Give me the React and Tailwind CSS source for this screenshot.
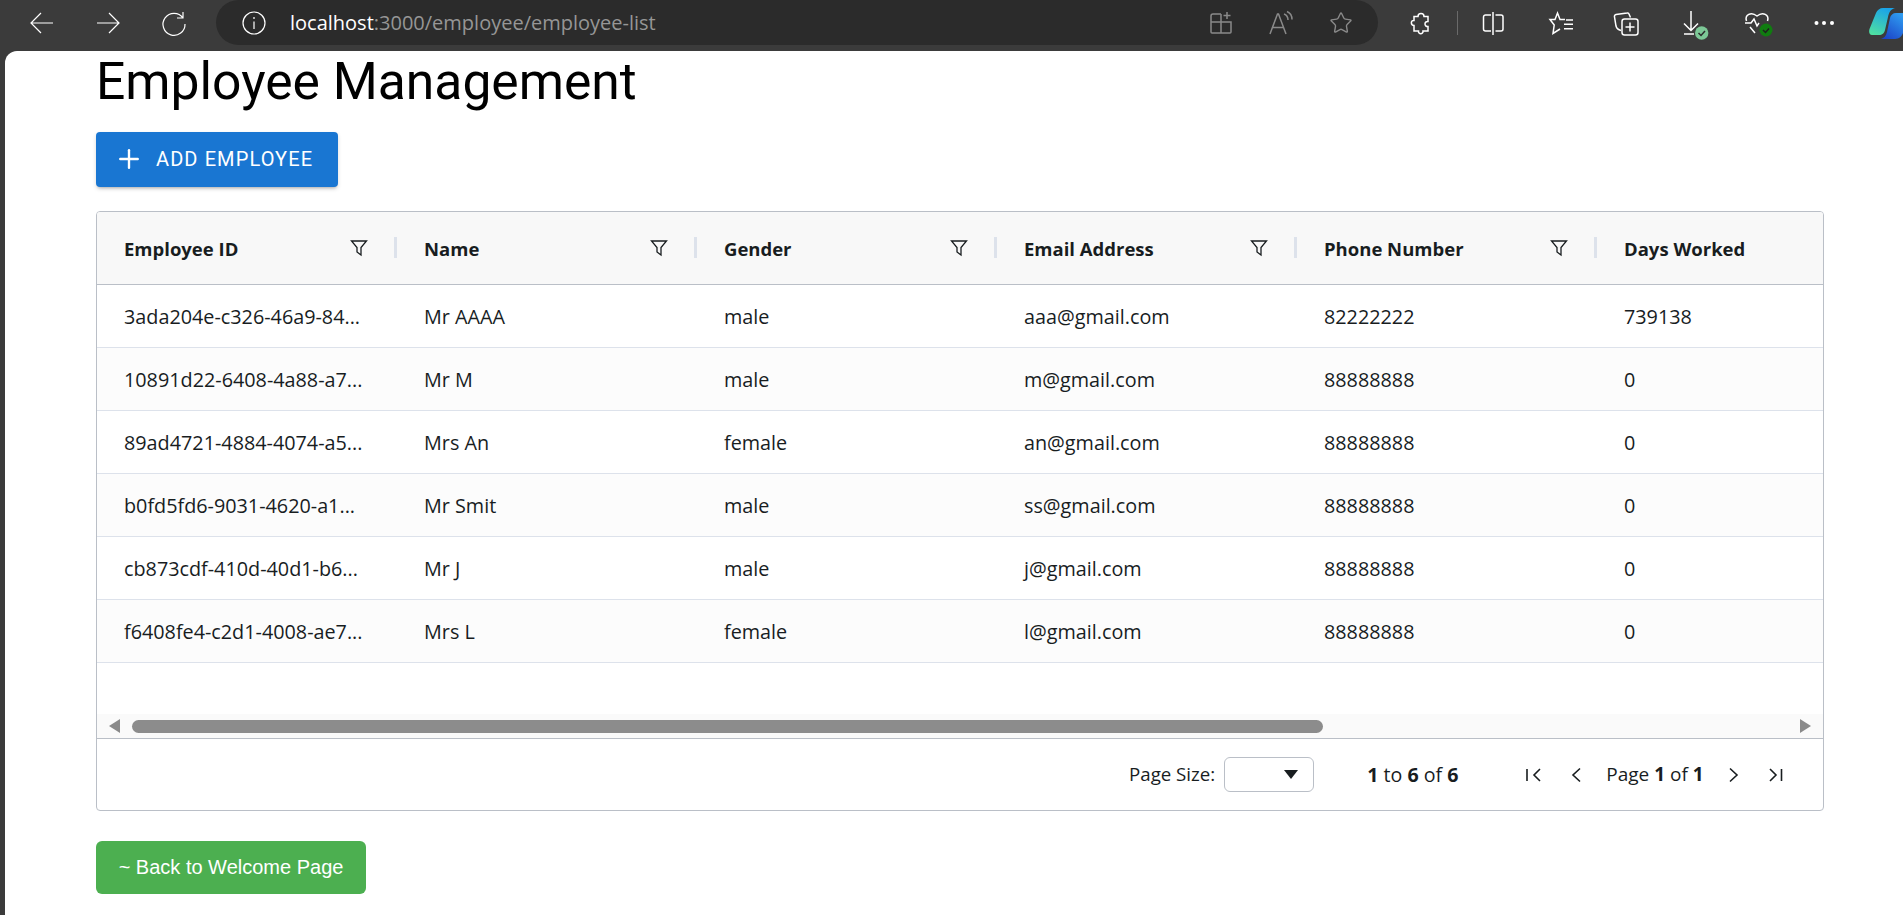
import { Star, Plus } from "lucide-react";

const columns = [
  { title: "Employee ID", filter: true },
  { title: "Name", filter: true },
  { title: "Gender", filter: true },
  { title: "Email Address", filter: true },
  { title: "Phone Number", filter: true },
  { title: "Days Worked", filter: false },
];

const rows = [
  ["3ada204e-c326-46a9-84...", "Mr AAAA", "male", "aaa@gmail.com", "82222222", "739138"],
  ["10891d22-6408-4a88-a7...", "Mr M", "male", "m@gmail.com", "88888888", "0"],
  ["89ad4721-4884-4074-a5...", "Mrs An", "female", "an@gmail.com", "88888888", "0"],
  ["b0fd5fd6-9031-4620-a1...", "Mr Smit", "male", "ss@gmail.com", "88888888", "0"],
  ["cb873cdf-410d-40d1-b6...", "Mr J", "male", "j@gmail.com", "88888888", "0"],
  ["f6408fe4-c2d1-4008-ae7...", "Mrs L", "female", "l@gmail.com", "88888888", "0"],
];

const FilterIcon = () => (
  <svg width="18" height="18" viewBox="0 0 18 18" fill="none" stroke="#181d1f" strokeWidth="1.3">
    <path d="M1.5 2h15l-5.5 6.5V16l-4-3V8.5z" />
  </svg>
);

const Chevron = ({ d }) => (
  <svg width="18" height="18" viewBox="0 0 18 18" fill="none" stroke="#181d1f" strokeWidth="1.6">
    <path d={d} />
  </svg>
);

// toolbar icon, 24 box, thin white stroke
const Tool = ({ children, className = "", size = 24, width = 1.5 }) => (
  <svg width={size} height={size} viewBox="0 0 24 24" fill="none" stroke="currentColor" strokeWidth={width} className={`shrink-0 overflow-visible ${className}`}>
    {children}
  </svg>
);

const BrowserBar = () => (
  <div className="h-[51px] flex items-start text-white">
    <div className="flex items-center h-[45px] pl-[30px] shrink-0">
      <Tool width={1.2}><path d="M23 12H1M11 2 1 12l10 10" /></Tool>
      <Tool width={1.2} className="ml-[42px]"><path d="M1 12h22M13 2l10 10-10 10" /></Tool>
      <Tool width={1.2} className="ml-[42px]"><path d="M21 1v6h-6M21 7A11 11 0 1 0 23 13" /></Tool>
    </div>
    <div className="ml-[30px] w-[1162px] h-[45px] rounded-[24px] bg-[#2b2b2b] flex items-center pl-[26px]">
      <Tool width={1.2}><circle cx="12" cy="12" r="11" /><path d="M12 10.5V18M12 6v2" /></Tool>
      <div className="ml-[24px] text-[20px] font-['Open_Sans',sans-serif]">
        localhost<span className="text-[#969696]">:3000/employee/employee-list</span>
      </div>
      <div className="ml-auto flex items-center gap-[36px] pr-[25px] text-[#8a8a8a]">
        <Tool><path d="M12 3H4a2 2 0 0 0-2 2v16a1 1 0 0 0 1 1h18a1 1 0 0 0 1-1V11H2M12 3v19M18 1v7M14.5 4.500h7" /></Tool>
        <Tool><path d="M1 23 8.500 3h1L17 23M3.500 16.500h11M15 3c2.500 1 4 3 4 6M18 .5c3.500 1.500 5 4.500 5 8" /></Tool>
        <Star size={24} strokeWidth={1.4} />
      </div>
    </div>
    <div className="flex items-center h-[45px] ml-[31px]">
      <Tool><path d="M9 5.500c0-4 6-4 6 0h4v5c-4-.5-4 5.500 0 5v4.500h-5c.5 3.500-5 3.500-4.500 0H5v-5.500C1.500 14.500 1.500 9 5 9.500v-4z" /></Tool>
      <div className="ml-[24px] w-px h-[24px] bg-[#6a6a6a]"></div>
      <Tool className="ml-[23px]"><path d="M10 4H4.500a2 2 0 0 0-2 2v12a2 2 0 0 0 2 2H10M14.500 4H20a2 2 0 0 1 2 2v12a2 2 0 0 1-2 2h-5.500M12 1v23" /></Tool>
      <Tool className="ml-[44px]"><path d="M16 8.500h-5L8.500 2 6 8.500H1l4.200 5.500L4 22.500l7-4.500M17 9h7M15 13.300h9M15 17.700h9" /></Tool>
      <Tool className="ml-[41px]"><path d="M16.500 6.500 15 3a1.500 1.500 0 0 0-2-1L2 3.500A2 2 0 0 0 .5 6L2 15c.5 2 3 4 5 4.500" /><rect x="8" y="8" width="16" height="16" rx="2.500" /><path d="M16 11.500v9M11.500 16h9" /></Tool>
      <Tool className="ml-[43px]"><path d="M10 0v19M3 12.500l7 7 7-7M3 23h10" /><circle cx="20.700" cy="22" r="6.700" fill="#7cc796" stroke="none" /><path d="m17.500 22 2.500 2.500 4-4.500" stroke="#2b2b2b" /></Tool>
      <Tool className="ml-[40px]"><path d="M1.500 10C-.5 4 6 0 12 5c6-5 12.500-1 10.500 5M0 12h6l3-4 3 7 2-3M5 16l5 6" /><circle cx="21" cy="19" r="6.500" fill="#107c10" stroke="none" /><path d="m18 19 2.500 2.500 3.500-4" stroke="#1f1f1f" /></Tool>
      <Tool className="ml-[43px]"><circle cx="4.500" cy="12" r="2" fill="currentColor" stroke="none" /><circle cx="12" cy="12" r="2" fill="currentColor" stroke="none" /><circle cx="20" cy="12" r="2" fill="currentColor" stroke="none" /></Tool>
      <svg width="34" height="32" viewBox="0 0 34 32" className="ml-[33px] shrink-0">
        <defs>
          <linearGradient id="copilotLeft" x1="0.6" y1="0" x2="0.2" y2="1">
            <stop offset="0" stopColor="#1aa3e8" />
            <stop offset="1" stopColor="#4fe0a0" />
          </linearGradient>
          <linearGradient id="copilotRight" x1="0.8" y1="0" x2="0.2" y2="1">
            <stop offset="0" stopColor="#2e9bf0" />
            <stop offset="1" stopColor="#1c44c8" />
          </linearGradient>
        </defs>
        <path d="M20 32h-8c3-1 5-3 6-7l3-14c.5-3 3-5 6-5h7v20c-1 3-4 6-8 6z" fill="url(#copilotRight)" />
        <path d="M14 1h12c-4 1-6 4-7 9l-3 13c-.5 3-3 5-6 5H3C.5 28-.5 25 .5 22L7 6c1-3 4-5 7-5z" fill="url(#copilotLeft)" />
      </svg>
    </div>
  </div>
);

export default function App() {
  return (
    <div className="h-[915px] w-full bg-[#3b3b3b] overflow-hidden font-['Open_Sans',sans-serif]">
      <BrowserBar />
      <div className="ml-[5px] h-[864px] bg-white rounded-tl-[12px] pl-[91px] pr-[79px]">
        <h1 className="text-[51.6px] leading-[61px] font-['Roboto',sans-serif] text-black m-0">Employee Management</h1>
        <button className="mt-[20px] h-[55px] w-[242px] rounded-[4px] bg-[#1976d2] text-white flex items-center pl-[18px] gap-[12px] font-['Roboto',sans-serif] font-normal text-[20px] tracking-[1.1px] pb-[2px] shadow-[0_3px_3px_-2px_rgba(0,0,0,0.2),0_2px_4px_0_rgba(0,0,0,0.14)]">
          <Plus size={30} strokeWidth={1.9} className="shrink-0" />
          ADD EMPLOYEE
        </button>
        <div className="mt-[24px] h-[600px] border border-[#babfc7] rounded-[4px] overflow-hidden flex flex-col text-[#181d1f]">
          <div className="flex h-[73px] shrink-0 bg-[#f8f8f8] border-b border-[#babfc7]">
            {columns.map((c) => (
              <div key={c.title} className="w-[300px] shrink-0 pl-[27px] pt-[1px] flex items-center relative font-bold text-[18.5px]">
                {c.title}
                {c.filter && (
                  <div className="absolute right-[29px] top-[27px]"><FilterIcon /></div>
                )}
                {c.filter && (
                  <div className="absolute right-0 top-[25px] w-[3px] h-[21px] bg-[#dde2eb]"></div>
                )}
              </div>
            ))}
          </div>
          <div className="flex-1">
            {rows.map((r, i) => (
              <div key={r[0]} className={`flex h-[63px] border-b border-[#dde2eb] ${i % 2 ? "bg-[#fcfcfc]" : "bg-white"}`}>
                {r.map((v, j) => (
                  <div key={j} className="w-[300px] shrink-0 pl-[27px] pt-[2px] flex items-center text-[19.8px]">{v}</div>
                ))}
              </div>
            ))}
          </div>
          <div className="h-[24px] shrink-0 bg-[#fafafa] flex items-center pl-[12px] pr-[12px]">
            <div className="w-0 h-0 border-y-[7px] border-y-transparent border-r-[11px] border-r-[#8a8a8a]"></div>
            <div className="ml-[12px] w-[1191px] h-[13px] rounded-full bg-[#8c8c8c]"></div>
            <div className="ml-auto w-0 h-0 border-y-[7px] border-y-transparent border-l-[11px] border-l-[#8a8a8a]"></div>
          </div>
          <div className="h-[72px] shrink-0 border-t border-[#babfc7] flex items-center text-[19px]">
            <span className="ml-[1032px] text-[18.7px]">Page Size:</span>
            <div className="ml-[9px] w-[90px] h-[35px] border border-[#babfc7] rounded-[6px] flex items-center justify-end pr-[15px]">
              <div className="w-0 h-0 border-x-[7px] border-x-transparent border-t-[9px] border-t-[#181d1f]"></div>
            </div>
            <span className="ml-[53px] w-[91px] text-[19.6px] whitespace-nowrap"><b>1</b> to <b>6</b> of <b>6</b></span>
            <div className="ml-[66px] flex items-center gap-[24px]">
              <Chevron d="M3 3v12M16 3l-6 6 6 6" />
              <Chevron d="M14 2.500 7 9l7 6.500" />
            </div>
            <span className="ml-[22px]">Page <b>1</b> of <b>1</b></span>
            <div className="ml-[21px] flex items-center gap-[24px]">
              <Chevron d="M5 2.500 12 9l-7 6.500" />
              <Chevron d="m3 3 6 6-6 6M14.500 3v12" />
            </div>
          </div>
        </div>
        <button className="mt-[30px] h-[53px] w-[270px] rounded-[6px] bg-[#4caf50] text-white text-[20px] pb-[2px] font-['Liberation_Sans',sans-serif]">
          ~ Back to Welcome Page
        </button>
      </div>
    </div>
  );
}
